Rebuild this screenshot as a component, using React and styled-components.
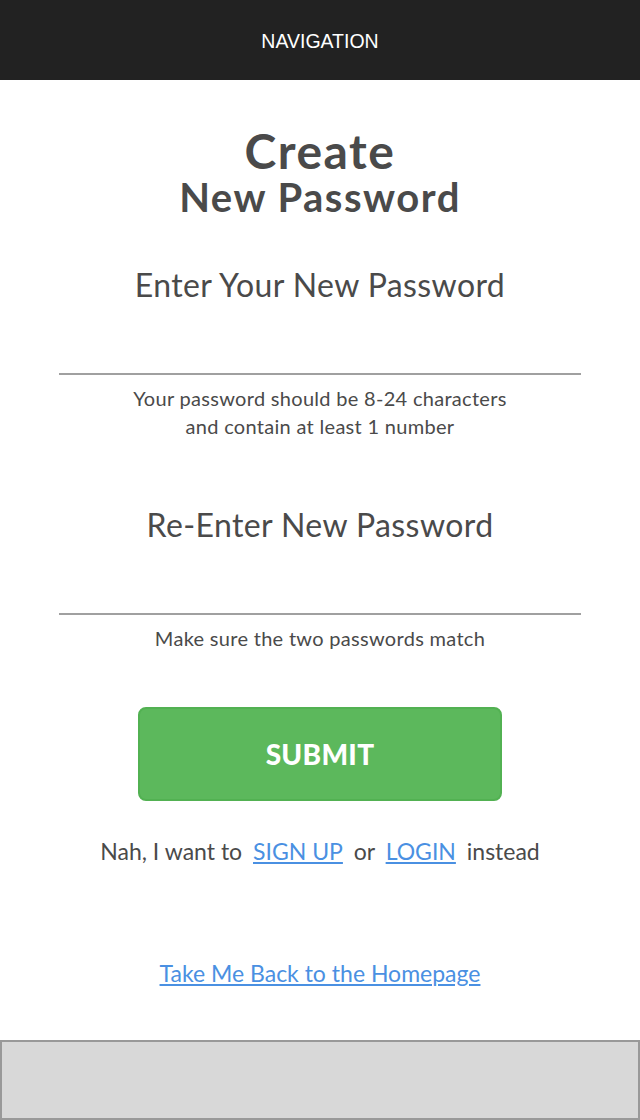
import React from 'react'
import styled, { createGlobalStyle } from 'styled-components'

const GlobalStyle = createGlobalStyle`
    * { box-sizing: border-box; }
    body {
        margin: 0;
        background: #fff;
        font-family: Lato, "Noto Sans", sans-serif;
        color: #4a4a4a;
    }
`

function App() {
    return (
        <Page>
            <GlobalStyle />
            <Nav>NAVIGATION</Nav>
            <Main>
                <Title>
                    <Big>Create</Big>
                    <Sub>New Password</Sub>
                </Title>
                <Field>
                    <Label>Enter Your New Password</Label>
                    <Input type="password" />
                    <Hint>
                        Your password should be 8-24 characters
                        <br />
                        and contain at least 1 number
                    </Hint>
                </Field>
                <Field $gap={65}>
                    <Label>Re-Enter New Password</Label>
                    <Input type="password" />
                    <Hint>Make sure the two passwords match</Hint>
                </Field>
                <Submit>SUBMIT</Submit>
                <Alt>
                    Nah, I want to <Link href="#">SIGN UP</Link> or <Link href="#">LOGIN</Link> instead
                </Alt>
                <Home href="#">Take Me Back to the Homepage</Home>
            </Main>
            <Footer />
        </Page>
    )
}

export default App

const Page = styled.div`
    display: flex;
    flex-direction: column;
    min-height: 1120px;
`
const Nav = styled.div`
    height: 80px;
    padding-top: 2px;
    background: #222;
    color: #fff;
    display: flex;
    align-items: center;
    justify-content: center;
    font-family: "Liberation Sans", Arial, sans-serif;
    font-size: 19.5px;
`
const Main = styled.div`
    flex: 1;
    display: flex;
    flex-direction: column;
    align-items: center;
    padding: 0 59px;
`
const Title = styled.h1`
    margin: 46px 0 0;
    text-align: center;
    font-weight: 700;
    color: #4a4a4a;
    letter-spacing: 1.5px;
`
const Big = styled.div`
    font-size: 48px;
    line-height: 50px;
`
const Sub = styled.div`
    font-size: 40px;
    line-height: 42px;
`
const Field = styled.div`
    width: 100%;
    display: flex;
    flex-direction: column;
    align-items: center;
    margin-top: ${p => p.$gap || 47}px;
`
const Label = styled.div`
    font-size: 32px;
    line-height: 40px;
    letter-spacing: 0.4px;
`
const Input = styled.input`
    width: 100%;
    height: 70px;
    border: none;
    border-bottom: 2px solid #a0a0a0;
    outline: none;
    background: transparent;
    font-size: 24px;
`
const Hint = styled.div`
    margin-top: 9px;
    font-size: 20px;
    line-height: 28px;
    letter-spacing: 0.3px;
    text-align: center;
`
const Submit = styled.button`
    margin-top: 55px;
    width: 364px;
    height: 94px;
    background: #5cb85c;
    border: 2px solid #52b152;
    border-radius: 8px;
    color: #fff;
    font-family: Lato, sans-serif;
    font-weight: 900;
    font-size: 28px;
    letter-spacing: 0.3px;
    cursor: pointer;
`
const Alt = styled.div`
    margin-top: 35px;
    font-size: 23px;
    line-height: 30px;
`
const Link = styled.a`
    color: #4a90e2;
    margin: 0 5px;
`
const Home = styled(Link)`
    margin-top: 93px;
    font-size: 23px;
`
const Footer = styled.div`
    height: 80px;
    background: #d8d8d8;
    border: 2px solid #999;
`
